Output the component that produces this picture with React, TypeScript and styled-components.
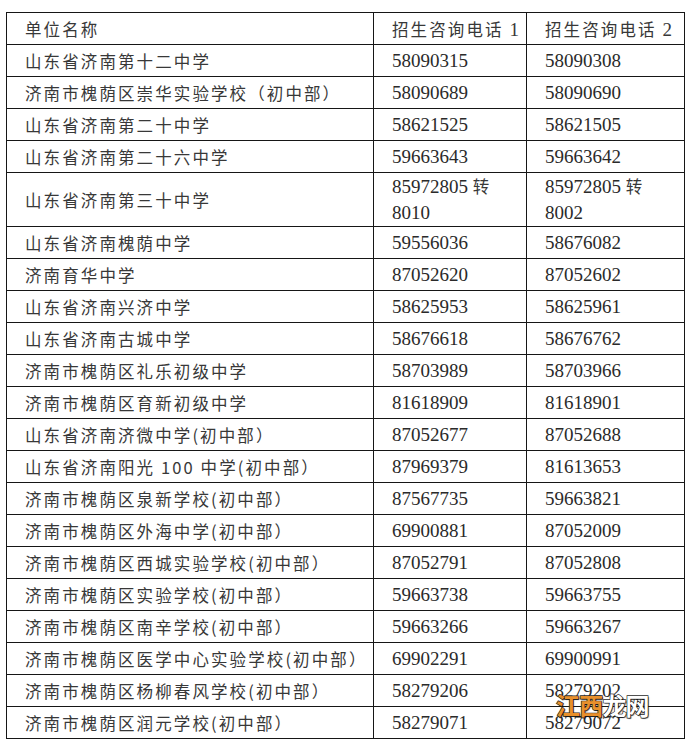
import React from "react";
import styled, { createGlobalStyle } from "styled-components";

const GlobalStyle = createGlobalStyle`
  html, body {
    margin: 0;
    padding: 0;
    background: #ffffff;
  }
  body {
    font-family: "Noto Sans CJK SC", sans-serif;
  }
`;

const Page = styled.div`
  position: relative;
  width: 690px;
  height: 740px;
  overflow: hidden;
  padding: 12px 0 0 6px;
  box-sizing: border-box;
  background: #fff;
`;

const Table = styled.table`
  border-collapse: collapse;
  table-layout: fixed;
  width: 678px;
  color: #2a2a2a;
`;

const Row = styled.tr<{ $tall?: boolean }>`
  height: ${(p) => (p.$tall ? "54px" : "32px")};
`;

const Cell = styled.td<{ $pad?: number }>`
  border: 1px solid #161616;
  padding: 0 0 0 ${(p) => p.$pad ?? 18}px;
  vertical-align: middle;
  white-space: nowrap;
  box-sizing: border-box;
`;

const NameText = styled.span`
  font-family: "Noto Sans CJK SC", sans-serif;
  font-size: 16.5px;
  letter-spacing: 2.1px;
  line-height: 1;
  font-weight: 400;
  color: #383838;
`;

const NumText = styled.span`
  font-family: "Liberation Serif", "Noto Sans CJK SC", serif;
  font-size: 19px;
  line-height: 26px;
  color: #2a2a2a;
  white-space: normal;
  display: block;
`;

const Han = styled.span`
  font-family: "Noto Sans CJK SC", sans-serif;
  font-size: 16.5px;
  color: #383838;
`;

const HeaderDigit = styled.span`
  font-family: "Liberation Serif", serif;
  font-size: 19px;
  letter-spacing: 0;
`;

const Watermark = styled.div`
  position: absolute;
  left: 556px;
  top: 693px;
  font-family: "Noto Sans CJK SC", sans-serif;
  font-weight: 700;
  font-size: 24px;
  letter-spacing: -0.8px;
  line-height: 1;
  -webkit-text-stroke: 1.4px #2b2b2b;
  paint-order: stroke fill;
  text-shadow: 1px 1px 1px rgba(0, 0, 0, 0.6);
`;

const WmPart = styled.span<{ $orange?: boolean }>`
  color: ${(p) => (p.$orange ? "#e8902c" : "#ffffff")};
`;

type RowData = { name: string; p1: string; p2: string; tall?: boolean };

const rows: RowData[] = [
  { name: "山东省济南第十二中学", p1: "58090315", p2: "58090308" },
  { name: "济南市槐荫区崇华实验学校（初中部）", p1: "58090689", p2: "58090690" },
  { name: "山东省济南第二十中学", p1: "58621525", p2: "58621505" },
  { name: "山东省济南第二十六中学", p1: "59663643", p2: "59663642" },
  { name: "山东省济南第三十中学", p1: "85972805 转 8010", p2: "85972805 转 8002", tall: true },
  { name: "山东省济南槐荫中学", p1: "59556036", p2: "58676082" },
  { name: "济南育华中学", p1: "87052620", p2: "87052602" },
  { name: "山东省济南兴济中学", p1: "58625953", p2: "58625961" },
  { name: "山东省济南古城中学", p1: "58676618", p2: "58676762" },
  { name: "济南市槐荫区礼乐初级中学", p1: "58703989", p2: "58703966" },
  { name: "济南市槐荫区育新初级中学", p1: "81618909", p2: "81618901" },
  { name: "山东省济南济微中学(初中部）", p1: "87052677", p2: "87052688" },
  { name: "山东省济南阳光 100 中学(初中部）", p1: "87969379", p2: "81613653" },
  { name: "济南市槐荫区泉新学校(初中部）", p1: "87567735", p2: "59663821" },
  { name: "济南市槐荫区外海中学(初中部）", p1: "69900881", p2: "87052009" },
  { name: "济南市槐荫区西城实验学校(初中部）", p1: "87052791", p2: "87052808" },
  { name: "济南市槐荫区实验学校(初中部）", p1: "59663738", p2: "59663755" },
  { name: "济南市槐荫区南辛学校(初中部）", p1: "59663266", p2: "59663267" },
  { name: "济南市槐荫区医学中心实验学校(初中部）", p1: "69902291", p2: "69900991" },
  { name: "济南市槐荫区杨柳春风学校(初中部）", p1: "58279206", p2: "58279202" },
  { name: "济南市槐荫区润元学校(初中部）", p1: "58279071", p2: "58279072" },
];

const renderPhone = (v: string) => {
  if (v.includes("转")) {
    const [a, b] = v.split(" 转 ");
    return (
      <NumText>
        {a} <Han>转</Han>
        <br />
        {b}
      </NumText>
    );
  }
  return <NumText>{v}</NumText>;
};

export default function App() {
  return (
    <>
      <GlobalStyle />
      <Page>
        <Table>
          <colgroup>
            <col style={{ width: 367 }} />
            <col style={{ width: 153 }} />
            <col style={{ width: 158 }} />
          </colgroup>
          <tbody>
            <Row>
              <Cell>
                <NameText>单位名称</NameText>
              </Cell>
              <Cell>
                <NameText>
                  招生咨询电话 <HeaderDigit>1</HeaderDigit>
                </NameText>
              </Cell>
              <Cell>
                <NameText>
                  招生咨询电话 <HeaderDigit>2</HeaderDigit>
                </NameText>
              </Cell>
            </Row>
            {rows.map((r) => (
              <Row key={r.name} $tall={r.tall}>
                <Cell>
                  <NameText>{r.name}</NameText>
                </Cell>
                <Cell>{renderPhone(r.p1)}</Cell>
                <Cell>{renderPhone(r.p2)}</Cell>
              </Row>
            ))}
          </tbody>
        </Table>
        <Watermark>
          <WmPart $orange>江西</WmPart>
          <WmPart>龙网</WmPart>
        </Watermark>
      </Page>
    </>
  );
}
